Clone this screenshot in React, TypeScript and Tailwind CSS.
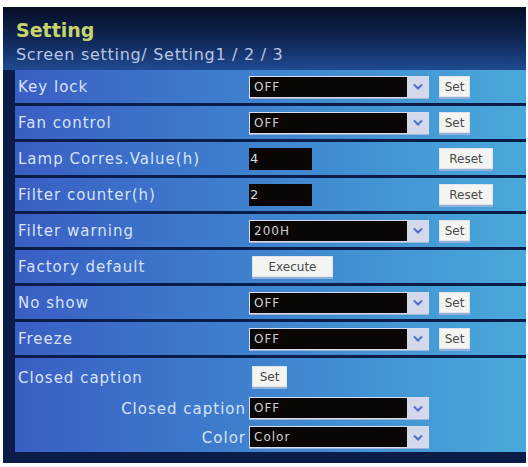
import React from "react";

const Chevron = () => (
  <svg width="10" height="7" viewBox="0 0 10 7">
    <path d="M1 1.5 L5 5.5 L9 1.5" fill="none" stroke="#4f6fc4" strokeWidth="2" />
  </svg>
);

const Select = ({ value }: { value: string }) => (
  <div className="flex h-[22px] w-[180px] border border-[#d6dcea] shadow-[0_1px_0_#9fb4d8]">
    <div className="flex-1 bg-[#0a0606] pl-[4px] flex items-center text-[12px] tracking-[1px] text-[#d0d0d0] font-['DejaVu_Sans',sans-serif]">
      {value}
    </div>
    <div className="w-[21px] bg-[#d3d8ea] flex items-center justify-center">
      <Chevron />
    </div>
  </div>
);

const Btn = ({ label, w }: { label: string; w: string }) => (
  <div
    className={`${w} h-[21px] bg-[#f4f4f2] border border-[#e0e4ea] shadow-[0_2px_0_#8fb0d8] flex items-center justify-center text-[12px] text-[#4a4a4a] font-['DejaVu_Sans',sans-serif]`}
  >
    {label}
  </div>
);

const Input = ({ value }: { value: string }) => (
  <div className="h-[22px] w-[63px] bg-[#0a0606] flex items-center pl-[1px] text-[13px] text-[#d8d8d8] font-['DejaVu_Sans',sans-serif]">
    {value}
  </div>
);

const Row = ({ label, children }: { label: string; children: React.ReactNode }) => (
  <div className="h-[33px] flex items-center bg-gradient-to-r from-[#3a5ec4] via-[#3f84cf] to-[#4aa9da]">
    <div className="w-[234px] pl-[3px] pt-[2px] text-[15px] tracking-[1px] text-[#d8e2f4] font-['DejaVu_Sans',sans-serif]">
      {label}
    </div>
    {children}
  </div>
);

const SelectSet = ({ value }: { value: string }) => (
  <div className="flex items-center gap-[10px]">
    <Select value={value} />
    <Btn label="Set" w="w-[31px]" />
  </div>
);

const InputReset = ({ value }: { value: string }) => (
  <div className="flex items-center">
    <Input value={value} />
    <div className="ml-[127px]">
      <Btn label="Reset" w="w-[54px]" />
    </div>
  </div>
);

export default function App() {
  return (
    <div className="w-[528px] h-[467px] bg-white pt-[7px] pl-[3px] pr-[2px] pb-[4px]">
      <div className="h-full flex flex-col bg-gradient-to-b from-[#07102a] to-[#143272]">
        <div className="h-[63px] pl-[13px] pt-[11px] bg-gradient-to-b from-[#060e26] via-[#0f2654] to-[#1f4a92]">
          <div className="text-[19px] leading-[24px] font-bold text-[#c6d46a] font-['DejaVu_Sans',sans-serif]">
            Setting
          </div>
          <div className="mt-[2px] text-[16px] leading-[22px] tracking-[0.7px] text-[#b8c6e2] font-['DejaVu_Sans',sans-serif]">
            Screen setting/ Setting1 / 2 / 3
          </div>
        </div>
        <div className="flex-1 pl-[12px] flex flex-col gap-[3px] bg-[#0b1c48]">
          <Row label="Key lock">
            <SelectSet value="OFF" />
          </Row>
          <Row label="Fan control">
            <SelectSet value="OFF" />
          </Row>
          <Row label="Lamp Corres.Value(h)">
            <InputReset value="4" />
          </Row>
          <Row label="Filter counter(h)">
            <InputReset value="2" />
          </Row>
          <Row label="Filter warning">
            <SelectSet value="200H" />
          </Row>
          <Row label="Factory default">
            <div className="ml-[3px]">
              <Btn label="Execute" w="w-[81px]" />
            </div>
          </Row>
          <Row label="No show">
            <SelectSet value="OFF" />
          </Row>
          <Row label="Freeze">
            <SelectSet value="OFF" />
          </Row>
          <div className="h-[94px] pt-[8px] flex flex-col bg-gradient-to-r from-[#3a5ec4] via-[#3f84cf] to-[#4aa9da] font-['DejaVu_Sans',sans-serif] text-[15px] leading-[20px] tracking-[1px] text-[#d8e2f4]">
            <div className="flex items-center h-[21px]">
              <div className="w-[234px] pl-[3px] pt-[2px]">Closed caption</div>
              <div className="ml-[3px] tracking-normal">
                <Btn label="Set" w="w-[35px]" />
              </div>
            </div>
            <div className="flex items-center h-[22px] mt-[10px]">
              <div className="w-[234px] pr-[3px] pt-[1px] text-right">Closed caption</div>
              <Select value="OFF" />
            </div>
            <div className="flex items-center h-[22px] mt-[7px]">
              <div className="w-[234px] pr-[3px] pt-[1px] text-right">Color</div>
              <Select value="Color" />
            </div>
          </div>
          <div className="h-[8px]" />
        </div>
      </div>
    </div>
  );
}
